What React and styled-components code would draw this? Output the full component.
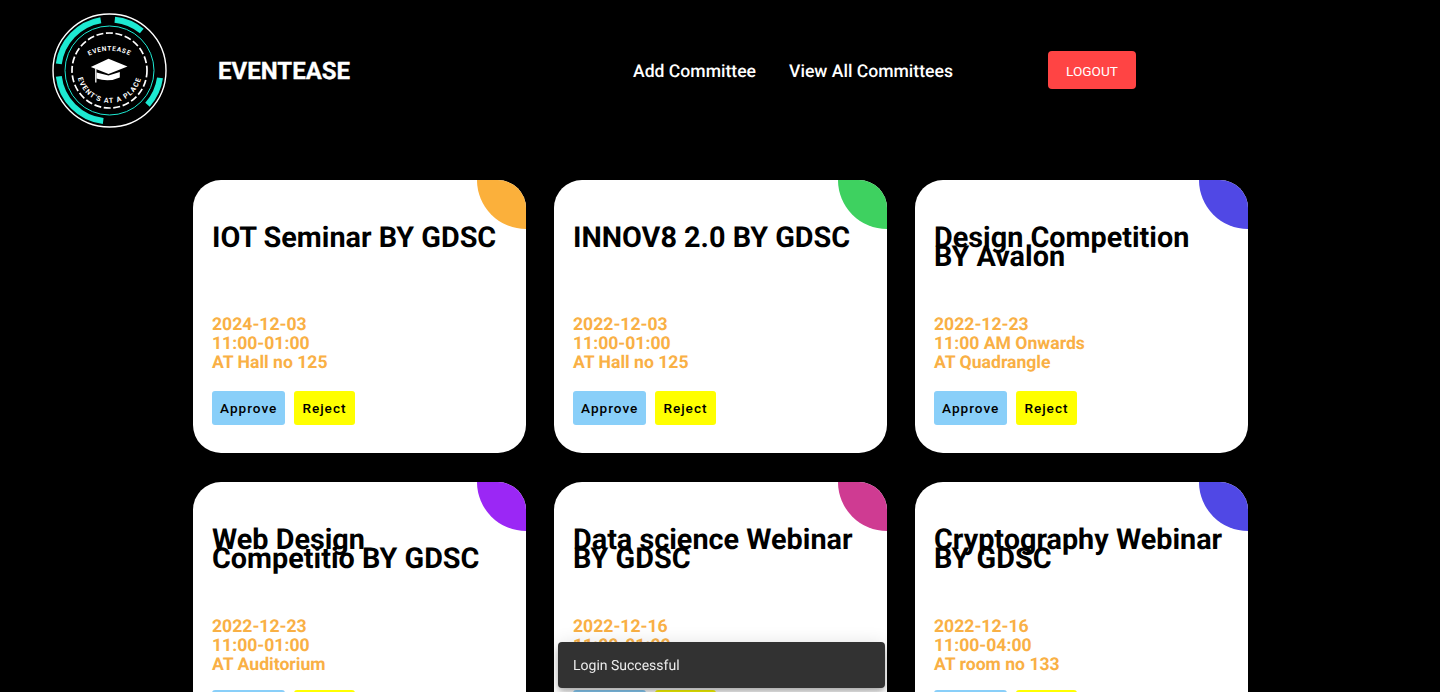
import styled, { createGlobalStyle } from "styled-components";

const GlobalStyle = createGlobalStyle`
  html, body {
    margin: 0;
    height: 692px;
    overflow: hidden;
    background: #000;
    font-family: Roboto, "Liberation Sans", sans-serif;
    text-rendering: geometricPrecision;
  }
`;

const Header = styled.header`
  height: 140px;
  display: flex;
  align-items: center;
  padding-left: 52px;
  color: white;
`;

const Logo = styled.svg`
  width: 115px;
  height: 115px;
  flex: none;
`;

const Brand = styled.div`
  margin: 2px 0 0 51px;
  width: 415px;
  font-size: 24px;
  font-weight: 700;
  -webkit-text-stroke: 0.3px white;
`;

const NavLink = styled.a`
  margin: 3px 33px 0 0;
  font-size: 17.6px;
  font-weight: 500;
`;

const LogoutButton = styled.button`
  margin-left: 62px;
  width: 88px;
  height: 38px;
  padding-top: 2px;
  border: none;
  border-radius: 4px;
  background: #ff4444;
  color: white;
  font-family: inherit;
  font-size: 13.6px;
`;

const Grid = styled.main`
  display: grid;
  grid-template-columns: repeat(3, 333px);
  column-gap: 28px;
  row-gap: 29px;
  margin: 40px 0 0 193px;
`;

const Title = styled.h2`
  margin: 42px 0 0;
  height: 82px;
  font-size: 28.8px;
  font-weight: 700;
  line-height: 19px;
  padding-top: 7px;
  box-sizing: border-box;
`;

const Details = styled.div`
  margin-top: 12px;
  color: #f9b045;
  font-size: 17.6px;
  font-weight: 700;
  line-height: 19px;
`;

const Actions = styled.div`
  display: flex;
  gap: 9px;
  margin-top: 18px;
`;

const Card = styled.article`
  position: relative;
  overflow: hidden;
  height: 273px;
  padding: 0 19px;
  background: white;
  border-radius: 28px;
  color: black;
  display: flex;
  flex-direction: column;

  &::after {
    content: "";
    position: absolute;
    top: -49px;
    right: -49px;
    width: 98px;
    height: 98px;
    border-radius: 50%;
    background: ${(props) => props.$accent};
  }

  &:nth-child(n + 4) ${Actions} {
    margin-top: 15px;
  }
`;

const ActionButton = styled.button`
  height: 34px;
  padding: 0 8px;
  border: none;
  border-radius: 3px;
  background: ${(props) => props.$bg};
  color: black;
  font-family: inherit;
  font-size: 13.6px;
  font-weight: 500;
  letter-spacing: 1px;
`;

const Toast = styled.div`
  position: fixed;
  left: 558px;
  top: 642px;
  width: 327px;
  height: 46px;
  box-sizing: border-box;
  padding: 2px 15px 0;
  display: flex;
  align-items: center;
  background: #323232;
  border-radius: 4px;
  color: rgba(255, 255, 255, 0.9);
  font-size: 14px;
  box-shadow: 0 3px 5px -1px rgba(0, 0, 0, 0.2), 0 6px 10px rgba(0, 0, 0, 0.14),
    0 1px 18px rgba(0, 0, 0, 0.12);
`;

const events = [
  { title: "IOT Seminar BY GDSC", date: "2024-12-03", time: "11:00-01:00", place: "AT Hall no 125", accent: "#fbb03b" },
  { title: "INNOV8 2.0 BY GDSC", date: "2022-12-03", time: "11:00-01:00", place: "AT Hall no 125", accent: "#3ed160" },
  { title: "Design Competition BY Avalon", date: "2022-12-23", time: "11:00 AM Onwards", place: "AT Quadrangle", accent: "#5048e5" },
  { title: "Web Design Competitio BY GDSC", date: "2022-12-23", time: "11:00-01:00", place: "AT Auditorium", accent: "#9b27f5" },
  { title: "Data science Webinar BY GDSC", date: "2022-12-16", time: "11:00-01:00", place: "AT Hall no 125", accent: "#cf3b92" },
  { title: "Cryptography Webinar BY GDSC", date: "2022-12-16", time: "11:00-04:00", place: "AT room no 133", accent: "#5048e5" },
];

function LogoMark() {
  return (
    <Logo viewBox="0 0 115 115">
      <defs>
        <path id="topArc" d="M 32 46 A 43 43 0 0 1 83 46" />
        <path id="bottomArc" d="M 25 57.5 A 32.5 32.5 0 0 0 90 57.5" />
      </defs>
      <circle cx="57.5" cy="57.5" r="56.5" fill="none" stroke="white" strokeWidth="1.4" />
      <g fill="none" stroke="#1de9d2" strokeWidth="6">
        <path d="M 6.8 50.9 A 51 51 0 0 1 48.8 7.2" />
        <path d="M 62.8 6.8 A 51 51 0 0 1 89.8 18" />
        <path d="M 108 64.9 A 51 51 0 0 1 95.5 91.7" />
        <path d="M 51.2 108.1 A 51 51 0 0 1 6.8 63.4" />
      </g>
      <circle cx="57.5" cy="57.5" r="44.5" fill="none" stroke="#1de9d2" strokeWidth="1" />
      <circle cx="57.5" cy="57.5" r="37.5" fill="none" stroke="white" strokeWidth="1.7" strokeDasharray="7 2.6" />
      <text fill="white" fontFamily="Roboto" fontSize="6.5" fontWeight="700" letterSpacing="0.7">
        <textPath href="#topArc" startOffset="50%" textAnchor="middle">EVENTEASE</textPath>
      </text>
      <text fill="white" fontFamily="Roboto" fontSize="7" fontWeight="700" letterSpacing="1.1">
        <textPath href="#bottomArc" startOffset="50%" textAnchor="middle">EVENT'S AT A PLACE</textPath>
      </text>
      <path d="M 38.8 54 L 56.5 45.8 L 75.5 53.5 L 56.5 61 Z" fill="white" />
      <path d="M 44.5 59.5 L 56.5 62.5 L 67.8 59 V 64.5 Q 57 69.5 44.5 65.5 Z" fill="white" />
      <path d="M 43.8 55.5 V 69.5" stroke="white" strokeWidth="1.3" />
    </Logo>
  );
}

export default function App() {
  return (
    <>
      <GlobalStyle />
      <Header>
        <LogoMark />
        <Brand>EVENTEASE</Brand>
        <NavLink>Add Committee</NavLink>
        <NavLink>View All Committees</NavLink>
        <LogoutButton>LOGOUT</LogoutButton>
      </Header>
      <Grid>
        {events.map((event) => (
          <Card key={event.title} $accent={event.accent}>
            <Title>{event.title}</Title>
            <Details>
              <div>{event.date}</div>
              <div>{event.time}</div>
              <div>{event.place}</div>
            </Details>
            <Actions>
              <ActionButton $bg="#89cff9">Approve</ActionButton>
              <ActionButton $bg="#ffff00">Reject</ActionButton>
            </Actions>
          </Card>
        ))}
      </Grid>
      <Toast>Login Successful</Toast>
    </>
  );
}
